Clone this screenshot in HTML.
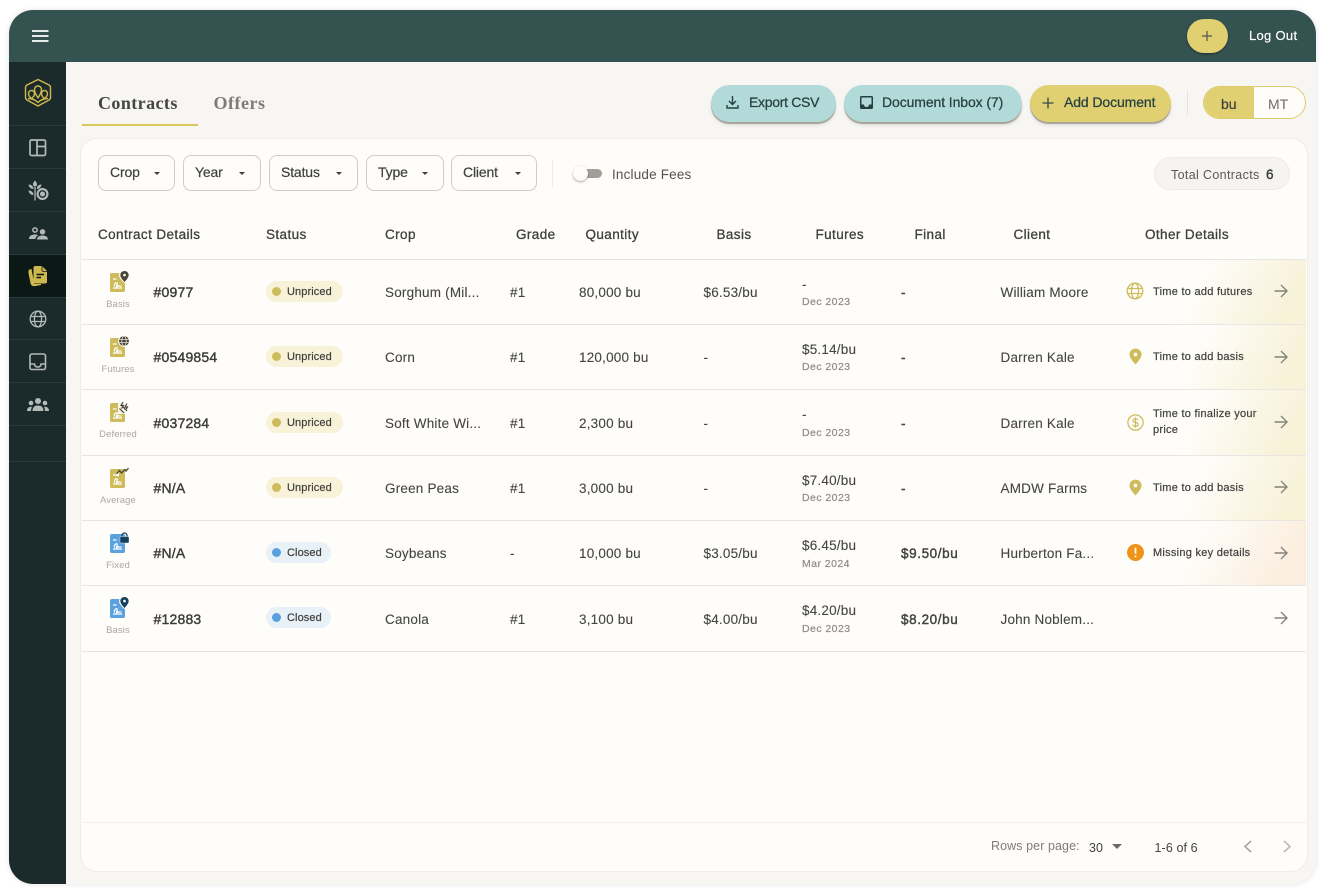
<!DOCTYPE html>
<html><head><meta charset="utf-8"><title>Contracts</title>
<style>
*{box-sizing:border-box}
html,body{margin:0;padding:0;width:1322px;height:890px;overflow:hidden;background:#fff;font-family:"Liberation Sans",sans-serif;color:#3c3c3a}
#app{position:absolute;left:9px;top:10px;width:1307px;height:874px;border-radius:24px;background:#f7f6f2;box-shadow:0 0 4px 1px rgba(0,0,0,.09);overflow:hidden}
.a{position:absolute}
.t{position:absolute;white-space:nowrap;line-height:20px;height:20px}
.h{font-size:13.5px;font-weight:400;color:#3f3f3d;-webkit-text-stroke:.3px #3f3f3d;letter-spacing:.4px;margin-top:1px}
.c{font-size:13.5px;color:#444442;letter-spacing:.2px;-webkit-text-stroke:.1px #444442}
.id{font-size:14px;font-weight:400;color:#3c3c3a;-webkit-text-stroke:.4px #3c3c3a;letter-spacing:.2px}
.sub{font-size:10.5px;color:#8d8c88;-webkit-text-stroke:.2px #8d8c88;letter-spacing:.45px;margin-top:1px}
.lab{font-size:9.5px;color:#a9a8a4;text-align:center;width:50px;margin-top:1px;letter-spacing:.1px}
.od{font-size:11px;color:#3f3f3d;-webkit-text-stroke:.2px #3f3f3d;letter-spacing:.27px;margin-top:1px}
.b{-webkit-text-stroke:.4px #3c3c3a}
.fin{letter-spacing:.6px}
.line{position:absolute;left:82px;width:1224px;height:1px;background:#e7e6e2}
.sl{position:absolute;left:9px;width:57px;height:1px;background:#2b3b3b}
.pill{position:absolute;height:21px;border-radius:11px}
.dot{position:absolute;left:6px;top:6px;width:9px;height:9px;border-radius:50%}
.pt{position:absolute;left:21px;top:1px;line-height:21px;font-size:11px;color:#3f3f3d;white-space:nowrap;-webkit-text-stroke:.2px #3f3f3d;letter-spacing:.1px}
.un{background:#f8f2d9}.un .dot{background:#cdbb5c}
.cl{background:#e9f1f8}.cl .dot{background:#58a0de}
.fb{position:absolute;top:155px;height:36px;border:1px solid #cfcdc8;border-radius:8px;background:#fefdfa}
.fb span{position:absolute;left:11px;top:6px;line-height:20px;font-size:14px;color:#3f3f3d;letter-spacing:-.15px;-webkit-text-stroke:.2px #3f3f3d}
.fb i{position:absolute;top:16px;width:0;height:0;border-left:3.5px solid transparent;border-right:3.5px solid transparent;border-top:3.5px solid #3f3f3d}
.btn{position:absolute;top:85px;height:37px;border-radius:19px;box-shadow:0 2px 0 #aaa69c,0 3px 3px rgba(0,0,0,.12)}
.btn span{position:absolute;top:7px;line-height:20px;font-size:14px;color:#26403f;white-space:nowrap;-webkit-text-stroke:.25px #26403f;letter-spacing:-.1px}
svg{position:absolute;overflow:visible}
.bg{position:absolute;left:1107px;width:199px;}
</style></head><body>
<svg width="0" height="0" style="position:absolute"><defs>
<symbol id="doc" viewBox="0 0 15 19"><rect width="15" height="19" rx="1.800" fill="currentColor"/><path d="M3 6H6.500" stroke="#fff" stroke-width="1.200"/><path d="M3 15H12M4.500 13.500C3.800 10.500 7 8.500 7.300 10.500C7.500 12 5.500 13.800 6.800 13.800C7.800 13.800 7.800 12.300 8.800 12.800C9.500 13.200 10 13.300 11.500 12.800" stroke="#fff" stroke-width="1.200" fill="none"/></symbol>
<symbol id="arrow" viewBox="0 0 14 14"><path d="M.5 7H13M7 1L13 7L7 13" fill="none" stroke="#85847f" stroke-width="1.400"/></symbol>
<symbol id="pin" viewBox="0 0 14 17"><path d="M7 0C3.300 0 .5 2.800 .5 6.300C.5 10.500 7 17 7 17S13.500 10.500 13.500 6.300C13.500 2.800 10.700 0 7 0Z" fill="currentColor"/><circle cx="7" cy="6.300" r="2" fill="#fefdfa"/></symbol>
<symbol id="globe" viewBox="0 0 18 18"><g fill="none" stroke="currentColor" stroke-width="1.300"><circle cx="9" cy="9" r="7.800"/><ellipse cx="9" cy="9" rx="3.600" ry="7.800"/><path d="M1.500 6.500H16.500M1.500 11.500H16.500"/></g></symbol>
</defs></svg>

<div id="app"></div>

<!-- header -->
<div class="a" style="left:9px;top:10px;width:1307px;height:52px;background:#345250;border-radius:24px 24px 0 0"></div>
<svg style="left:32px;top:30px" width="17" height="12"><path d="M0 1H16.500M0 6H16.500M0 11H16.500" stroke="#fff" stroke-width="1.700"/></svg>
<div class="a" style="left:1187px;top:19px;width:41px;height:34px;border-radius:17px;background:#e0d072;box-shadow:0 1px 2px rgba(0,0,0,.4)"></div>
<svg style="left:1201px;top:30px" width="12" height="12"><path d="M6 1V11M1 6H11" stroke="#56544a" stroke-width="1.200"/></svg>
<div class="t" style="left:1249px;top:26px;font-size:13px;color:#fff;-webkit-text-stroke:.2px #fff;letter-spacing:.3px">Log Out</div>

<!-- sidebar -->
<div class="a" style="left:9px;top:62px;width:57px;height:822px;background:#1b2b2b;border-radius:0 0 0 24px"></div>
<div class="a" style="left:9px;top:255px;width:57px;height:42px;background:#0c1816"></div>
<div class="sl" style="top:125px"></div><div class="sl" style="top:168px"></div><div class="sl" style="top:211px"></div><div class="sl" style="top:254px"></div><div class="sl" style="top:297px"></div><div class="sl" style="top:339px"></div><div class="sl" style="top:382px"></div><div class="sl" style="top:425px"></div><div class="sl" style="top:461px"></div>
<svg style="left:24px;top:78px" width="28" height="30" viewBox="0 0 28 30"><g fill="none" stroke="#cfb84f" stroke-width="1.400" stroke-linejoin="round"><path d="M14 1.500L25 7Q26.500 8 26.500 9.500V19.500Q26.500 21 25 22L14 28L3 22Q1.500 21 1.500 19.500V9.500Q1.500 8 3 7Z"/><path d="M14 20C11 15.500 10.500 13.500 10.500 11.500A3.500 3.500 0 0 1 17.500 11.500C17.500 13.500 17 15.500 14 20Z"/><path d="M7.500 20.500C5 18.500 4.500 17 4.500 15.500A3 3 0 0 1 10.500 15.500C10.500 17 9.500 19 7.500 20.500Z"/><path d="M20.500 20.500C23 18.500 23.500 17 23.500 15.500A3 3 0 0 0 17.500 15.500C17.500 17 18.500 19 20.500 20.500Z"/><path d="M4 20.500C8 20.500 11 21.500 14 24.500C17 21.500 20 20.500 24 20.500"/></g></svg>
<svg style="left:29px;top:139px" width="18" height="18" viewBox="0 0 18 18"><g fill="none" stroke="#b4bab8" stroke-width="1.700"><rect x="1" y="1" width="15.500" height="15.500" rx="1.500"/><path d="M8 1V16.500M8 7.500H16.500"/></g></svg>
<svg style="left:28px;top:180px" width="21" height="21" viewBox="0 0 21 21"><g fill="#b4bab8"><path d="M7 .5C8.500 2 9 3.500 9 4.500A2 2 0 0 1 5 4.500C5 3.500 5.500 2 7 .5Z"/><path d="M.5 4.500C3 4.500 5.500 6 5.500 9C3 9 1 7.500 .5 4.500Z"/><path d="M.5 10.500C3 10.500 5.500 12 5.500 15C3 15 1 13.500 .5 10.500Z"/><path d="M13.500 4.500C11 4.500 8.800 6 8.800 9C11 9 13 7.500 13.500 4.500Z"/><rect x="6.400" y="7" width="1.300" height="13.500"/><circle cx="14.500" cy="14" r="6"/></g><circle cx="14.500" cy="14" r="3.200" fill="none" stroke="#1b2b2b" stroke-width="1.300"/></svg>
<svg style="left:29px;top:227px" width="19" height="13" viewBox="0 0 19 13"><g fill="#b4bab8"><circle cx="6" cy="3" r="2.900"/><circle cx="6" cy="3" r="1.400" fill="#1b2b2b"/><path d="M0 12C0 8.500 3 7.500 6 7.500C7.500 7.500 8.500 7.800 9 8.200C7.500 9.200 6.500 10.500 6.300 12Z"/><circle cx="13.500" cy="4.800" r="2.700"/><path d="M8 12.500C8 9.500 11 8.500 13.500 8.500S19 9.500 19 12.500Z"/></g></svg>
<svg style="left:28px;top:265px" width="20" height="22" viewBox="0 0 20 22"><path d="M3 4.500C1 5 .5 6 1 8L3 18C3.500 20.500 5 21 7.500 20.500L13 19.500H6Z" fill="#cfb84f" stroke="#cfb84f"/><path d="M5.500 3A2 2 0 0 1 7.500 1H14L19 6V16.500A2 2 0 0 1 17 18.500H7.500A2 2 0 0 1 5.500 16.500Z" fill="#cfb84f"/><path d="M14 1V5A1.500 1.500 0 0 0 15.500 6.500H19" fill="none" stroke="#0c1816" stroke-width=".8"/><path d="M8.500 9.500H16M8.500 12.500H13" stroke="#0c1816" stroke-width="1.400"/></svg>
<svg style="left:29px;top:310px;color:#b4bab8" width="18" height="18"><use href="#globe"/></svg>
<svg style="left:29px;top:353px" width="18" height="18" viewBox="0 0 18 18"><g fill="none" stroke="#b4bab8" stroke-width="1.600"><rect x="1" y="1" width="15.500" height="15.500" rx="1.800"/><path d="M1 11H5.500C5.500 13 7 14 8.800 14S12 13 12 11H16.500"/></g></svg>
<svg style="left:27px;top:398px" width="22" height="14" viewBox="0 0 22 14"><g fill="#b4bab8"><circle cx="11" cy="3" r="3"/><path d="M5.500 13C5.500 9 8 7.500 11 7.500S16.500 9 16.500 13Z"/><circle cx="4" cy="5" r="2.300"/><path d="M0 13C0 10 1.800 8.500 5 8.800C4.300 10 4 11.500 4 13Z"/><circle cx="18" cy="5" r="2.300"/><path d="M22 13C22 10 20.200 8.500 17 8.800C17.700 10 18 11.500 18 13Z"/></g></svg>

<!-- tabs -->
<div class="t" style="left:98px;top:93px;font-family:'Liberation Serif',serif;font-size:18px;font-weight:700;color:#454543;letter-spacing:.42px">Contracts</div>
<div class="t" style="left:213.500px;top:93px;font-family:'Liberation Serif',serif;font-size:18px;font-weight:700;color:#7c7b77;letter-spacing:.5px">Offers</div>
<div class="a" style="left:82px;top:123.500px;width:116px;height:2px;background:#dac95f"></div>

<!-- buttons -->
<div class="btn" style="left:711px;width:125px;background:#b2dad9"><span style="left:38px;letter-spacing:-.3px">Export CSV</span></div>
<svg style="left:726px;top:96px" width="13" height="13" viewBox="0 0 13 13"><path d="M6.500 0V8M3 5L6.500 8.500L10 5M1 9V12H12V9" fill="none" stroke="#26403f" stroke-width="1.400"/></svg>
<div class="btn" style="left:844px;width:178px;background:#b2dad9"><span style="left:38px">Document Inbox (7)</span></div>
<svg style="left:860px;top:96px" width="13" height="13" viewBox="0 0 13 13"><path d="M1.500 0H11.500A1.500 1.500 0 0 1 13 1.500V11.500A1.500 1.500 0 0 1 11.500 13H1.500A1.500 1.500 0 0 1 0 11.500V1.500A1.500 1.500 0 0 1 1.500 0ZM1.500 1.500V8.500H4C4 10 5 11 6.500 11S9 10 9 8.500H11.500V1.500Z" fill="#26403f" fill-rule="evenodd"/></svg>
<div class="btn" style="left:1030px;width:141px;background:#e0d072"><span style="left:34px">Add Document</span></div>
<svg style="left:1042px;top:97px" width="12" height="12"><path d="M6 .5V11.500M.5 6H11.500" stroke="#3a4a44" stroke-width="1.300"/></svg>
<div class="a" style="left:1187px;top:90px;width:1px;height:26px;background:#e6e5e0"></div>
<div class="a" style="left:1203px;top:86px;width:103px;height:33px;border-radius:17px;border:1.500px solid #dccb6a;background:#fefdfa;overflow:hidden"><div style="width:50px;height:100%;background:#e0d072"></div></div>
<div class="t" style="left:1221px;top:94px;font-size:14px;color:#3f3f3d;-webkit-text-stroke:.2px #3f3f3d">bu</div>
<div class="t" style="left:1268px;top:94px;font-size:14px;color:#6d6c68">MT</div>

<!-- card -->
<div class="a" style="left:81px;top:139px;width:1226px;height:732px;border-radius:16px;background:#fefdfa;box-shadow:0 0 0 1px #eeede8"></div>

<!-- filters -->
<div class="fb" style="left:98px;width:77px"><span>Crop</span><i style="left:55px"></i></div>
<div class="fb" style="left:183px;width:78px"><span>Year</span><i style="left:55px"></i></div>
<div class="fb" style="left:269px;width:89px"><span>Status</span><i style="left:66px"></i></div>
<div class="fb" style="left:366px;width:78px"><span>Type</span><i style="left:55px"></i></div>
<div class="fb" style="left:451px;width:86px"><span>Client</span><i style="left:63px"></i></div>
<div class="a" style="left:552px;top:160px;width:1px;height:27px;background:#eeece8"></div>
<div class="a" style="left:582px;top:169px;width:20px;height:9px;border-radius:5px;background:#a09f9a"></div>
<div class="a" style="left:573px;top:166px;width:15px;height:15px;border-radius:50%;background:#fefdfa;box-shadow:0 1px 2px rgba(0,0,0,.35)"></div>
<div class="t" style="left:612px;top:165px;font-size:13.500px;color:#555451;letter-spacing:.18px">Include Fees</div>
<div class="a" style="left:1154px;top:157px;width:136px;height:33px;border-radius:17px;background:#f5f4f0;border:1px solid #ecebe6"></div>
<div class="t" style="left:1171px;top:165px;font-size:12.500px;color:#5a5955;letter-spacing:.35px">Total Contracts</div>
<div class="t b" style="left:1266px;top:165px;font-size:13.500px">6</div>

<!-- head -->
<div class="t h" style="left:98px;top:224px">Contract Details</div>
<div class="t h" style="left:266px;top:224px">Status</div>
<div class="t h" style="left:385px;top:224px">Crop</div>
<div class="t h" style="left:516px;top:224px">Grade</div>
<div class="t h" style="left:585.500px;top:224px">Quantity</div>
<div class="t h" style="left:716.500px;top:224px">Basis</div>
<div class="t h" style="left:815.500px;top:224px">Futures</div>
<div class="t h" style="left:914.500px;top:224px">Final</div>
<div class="t h" style="left:1013.500px;top:224px">Client</div>
<div class="t h" style="left:1145px;top:224px">Other Details</div>

<!-- gradients -->
<div class="bg" style="top:260px;height:64px;background:linear-gradient(118deg,rgba(248,242,217,0) 42%,#f8f2d9 88%)"></div>
<div class="bg" style="top:325px;height:64px;background:linear-gradient(118deg,rgba(248,242,217,0) 42%,#f8f2d9 88%)"></div>
<div class="bg" style="top:390px;height:65px;background:linear-gradient(118deg,rgba(248,242,217,0) 42%,#f8f2d9 88%)"></div>
<div class="bg" style="top:456px;height:64px;background:linear-gradient(118deg,rgba(248,242,217,0) 42%,#f8f2d9 88%)"></div>
<div class="bg" style="top:521px;height:64px;background:linear-gradient(118deg,rgba(251,238,222,0) 42%,#fbeede 88%)"></div>

<!-- lines -->
<div class="line" style="top:259px"></div><div class="line" style="top:324px"></div><div class="line" style="top:389px"></div><div class="line" style="top:455px"></div><div class="line" style="top:520px"></div><div class="line" style="top:585px"></div><div class="line" style="top:651px"></div><div class="line" style="top:822px;background:#f2f1ed"></div>

<!-- row 1 -->
<svg style="left:110px;top:273px;color:#cdbb5c" width="15" height="19"><use href="#doc"/></svg>
<svg style="left:119px;top:270px" width="11" height="13" viewBox="0 0 11 13"><path d="M5.500 0C2.500 0 0 2.300 0 5.200C0 8.500 5.500 13 5.500 13S11 8.500 11 5.200C11 2.300 8.500 0 5.500 0Z" fill="#fefdfa"/></svg>
<svg style="left:120px;top:271px;color:#4a4636" width="9" height="11"><use href="#pin"/></svg>
<div class="t lab" style="left:93px;top:294px">Basis</div>
<div class="t id" style="left:153.500px;top:282px">#0977</div>
<div class="pill un" style="left:266px;top:281px;width:77px"><div class="dot"></div><div class="pt">Unpriced</div></div>
<div class="t c" style="left:385px;top:283px">Sorghum (Mil...</div>
<div class="t c" style="left:510px;top:283px">#1</div>
<div class="t c" style="left:579px;top:283px">80,000 bu</div>
<div class="t c" style="left:703.500px;top:283px">$6.53/bu</div>
<div class="t c" style="left:802px;top:275px">-</div>
<div class="t sub" style="left:802px;top:291px">Dec 2023</div>
<div class="t b c fin" style="left:901px;top:283px">-</div>
<div class="t c" style="left:1000.500px;top:283px">William Moore</div>
<svg style="left:1126px;top:282px;color:#cdbb5c" width="18" height="18"><use href="#globe"/></svg>
<div class="t od" style="left:1153px;top:281px">Time to add futures</div>
<svg style="left:1274px;top:284px" width="14" height="14"><use href="#arrow"/></svg>

<!-- row 2 -->
<svg style="left:110px;top:338px;color:#cdbb5c" width="15" height="19"><use href="#doc"/></svg>
<svg style="left:119px;top:336px;color:#4a4636" width="10" height="10" viewBox="0 0 18 18"><circle cx="9" cy="9" r="10.500" fill="#fefdfa"/><circle cx="9" cy="9" r="9" fill="#4a4636"/><g fill="none" stroke="#fefdfa" stroke-width="1.200"><ellipse cx="9" cy="9" rx="4" ry="9"/><path d="M0 6H18M0 12H18"/></g></svg>
<div class="t lab" style="left:93px;top:359px">Futures</div>
<div class="t id" style="left:153.500px;top:347px">#0549854</div>
<div class="pill un" style="left:266px;top:346px;width:77px"><div class="dot"></div><div class="pt">Unpriced</div></div>
<div class="t c" style="left:385px;top:348px">Corn</div>
<div class="t c" style="left:510px;top:348px">#1</div>
<div class="t c" style="left:579px;top:348px">120,000 bu</div>
<div class="t c" style="left:703.500px;top:348px">-</div>
<div class="t c" style="left:802px;top:340px">$5.14/bu</div>
<div class="t sub" style="left:802px;top:356px">Dec 2023</div>
<div class="t b c fin" style="left:901px;top:348px">-</div>
<div class="t c" style="left:1000.500px;top:348px">Darren Kale</div>
<svg style="left:1129px;top:348px;color:#cdbb5c" width="13" height="17"><use href="#pin"/></svg>
<div class="t od" style="left:1153px;top:346px">Time to add basis</div>
<svg style="left:1274px;top:350px" width="14" height="14"><use href="#arrow"/></svg>

<!-- row 3 -->
<svg style="left:110px;top:403px;color:#cdbb5c" width="15" height="19"><use href="#doc"/></svg>
<svg style="left:118px;top:401px" width="12" height="13" viewBox="0 0 12 13"><path d="M0 1H12V13H0Z" fill="#fefdfa" opacity=".9"/><path d="M5 1L3 4.500H5.500L3.500 7.500M9 2.500L7 6H9.500L7.500 9M1.500 7.500L6 12M4.500 5.500L9 10" fill="none" stroke="#4a4636" stroke-width="1.200"/></svg>
<div class="t lab" style="left:93px;top:424px">Deferred</div>
<div class="t id" style="left:153.500px;top:413px">#037284</div>
<div class="pill un" style="left:266px;top:412px;width:77px"><div class="dot"></div><div class="pt">Unpriced</div></div>
<div class="t c" style="left:385px;top:414px">Soft White Wi...</div>
<div class="t c" style="left:510px;top:414px">#1</div>
<div class="t c" style="left:579px;top:414px">2,300 bu</div>
<div class="t c" style="left:703.500px;top:414px">-</div>
<div class="t c" style="left:802px;top:405px">-</div>
<div class="t sub" style="left:802px;top:422px">Dec 2023</div>
<div class="t b c fin" style="left:901px;top:414px">-</div>
<div class="t c" style="left:1000.500px;top:414px">Darren Kale</div>
<svg style="left:1127px;top:414px" width="17" height="17" viewBox="0 0 17 17"><circle cx="8.500" cy="8.500" r="7.600" fill="none" stroke="#cdbb5c" stroke-width="1.300"/><path d="M11 6.200C10.500 5 9.500 4.700 8.500 4.700C7.200 4.700 6 5.400 6 6.600C6 9.300 11.200 7.700 11.200 10.400C11.200 11.600 10 12.300 8.500 12.300C7.300 12.300 6.300 11.800 5.800 10.700M8.500 3.300V13.700" fill="none" stroke="#cdbb5c" stroke-width="1.200"/></svg>
<div class="t od" style="left:1153px;top:403px">Time to finalize your</div>
<div class="t od" style="left:1153px;top:419px">price</div>
<svg style="left:1274px;top:415px" width="14" height="14"><use href="#arrow"/></svg>

<!-- row 4 -->
<svg style="left:110px;top:469px;color:#cdbb5c" width="15" height="19"><use href="#doc"/></svg>
<svg style="left:116px;top:467px" width="13" height="8" viewBox="0 0 13 8"><path d="M0 7.500H3M9 8H13" stroke="#fefdfa" stroke-width="3"/><path d="M.5 7L3.500 3.500L5.500 6L9 2.500L10 4L12.500 1" fill="none" stroke="#4a4636" stroke-width="1.300"/></svg>
<div class="t lab" style="left:93px;top:490px">Average</div>
<div class="t id" style="left:153.500px;top:478px">#N/A</div>
<div class="pill un" style="left:266px;top:477px;width:77px"><div class="dot"></div><div class="pt">Unpriced</div></div>
<div class="t c" style="left:385px;top:479px">Green Peas</div>
<div class="t c" style="left:510px;top:479px">#1</div>
<div class="t c" style="left:579px;top:479px">3,000 bu</div>
<div class="t c" style="left:703.500px;top:479px">-</div>
<div class="t c" style="left:802px;top:471px">$7.40/bu</div>
<div class="t sub" style="left:802px;top:487px">Dec 2023</div>
<div class="t b c fin" style="left:901px;top:479px">-</div>
<div class="t c" style="left:1000.500px;top:479px">AMDW Farms</div>
<svg style="left:1129px;top:479px;color:#cdbb5c" width="13" height="17"><use href="#pin"/></svg>
<div class="t od" style="left:1153px;top:477px">Time to add basis</div>
<svg style="left:1274px;top:480px" width="14" height="14"><use href="#arrow"/></svg>

<!-- row 5 -->
<svg style="left:110px;top:534px;color:#5ba3e0" width="15" height="19"><use href="#doc"/></svg>
<svg style="left:119.500px;top:533px" width="9" height="10" viewBox="0 0 9 10"><path d="M2 4V2.500A2.500 2.500 0 0 1 7 2.500V4" fill="none" stroke="#17405f" stroke-width="1.200"/><rect x="0" y="3.500" width="9" height="6.500" rx="1" fill="#17405f" stroke="#fefdfa" stroke-width=".4"/></svg>
<div class="t lab" style="left:93px;top:555px">Fixed</div>
<div class="t id" style="left:153.500px;top:543px">#N/A</div>
<div class="pill cl" style="left:266px;top:542px;width:65px"><div class="dot"></div><div class="pt">Closed</div></div>
<div class="t c" style="left:385px;top:544px">Soybeans</div>
<div class="t c" style="left:510px;top:544px">-</div>
<div class="t c" style="left:579px;top:544px">10,000 bu</div>
<div class="t c" style="left:703.500px;top:544px">$3.05/bu</div>
<div class="t c" style="left:802px;top:536px">$6.45/bu</div>
<div class="t sub" style="left:802px;top:553px">Mar 2024</div>
<div class="t b c fin" style="left:901px;top:544px">$9.50/bu</div>
<div class="t c" style="left:1000.500px;top:544px">Hurberton Fa...</div>
<svg style="left:1126.500px;top:544px" width="17" height="17" viewBox="0 0 17 17"><circle cx="8.500" cy="8.500" r="8.500" fill="#ee9418"/><path d="M8.500 3.800V9.800M8.500 11.500V13.300" stroke="#fff" stroke-width="1.700"/></svg>
<div class="t od" style="left:1153px;top:542px">Missing key details</div>
<svg style="left:1274px;top:546px" width="14" height="14"><use href="#arrow"/></svg>

<!-- row 6 -->
<svg style="left:110px;top:599px;color:#5ba3e0" width="15" height="19"><use href="#doc"/></svg>
<svg style="left:119px;top:596px" width="11" height="13" viewBox="0 0 11 13"><path d="M5.500 0C2.500 0 0 2.300 0 5.200C0 8.500 5.500 13 5.500 13S11 8.500 11 5.200C11 2.300 8.500 0 5.500 0Z" fill="#fefdfa"/></svg>
<svg style="left:120px;top:597px;color:#17405f" width="9" height="11"><use href="#pin"/></svg>
<div class="t lab" style="left:93px;top:620px">Basis</div>
<div class="t id" style="left:153.500px;top:609px">#12883</div>
<div class="pill cl" style="left:266px;top:607px;width:65px"><div class="dot"></div><div class="pt">Closed</div></div>
<div class="t c" style="left:385px;top:610px">Canola</div>
<div class="t c" style="left:510px;top:610px">#1</div>
<div class="t c" style="left:579px;top:610px">3,100 bu</div>
<div class="t c" style="left:703.500px;top:610px">$4.00/bu</div>
<div class="t c" style="left:802px;top:601px">$4.20/bu</div>
<div class="t sub" style="left:802px;top:618px">Dec 2023</div>
<div class="t b c fin" style="left:901px;top:610px">$8.20/bu</div>
<div class="t c" style="left:1000.500px;top:610px">John Noblem...</div>
<svg style="left:1274px;top:611px" width="14" height="14"><use href="#arrow"/></svg>

<!-- footer -->
<div class="t" style="left:991px;top:836px;font-size:12.500px;color:#7d7c78;letter-spacing:.08px">Rows per page:</div>
<div class="t" style="left:1089px;top:838px;font-size:12.500px;color:#444442">30</div>
<div class="a" style="left:1112px;top:844px;width:0;height:0;border-left:5px solid transparent;border-right:5px solid transparent;border-top:5px solid #6a6965"></div>
<div class="t" style="left:1154.500px;top:838px;font-size:12.500px;color:#444442;letter-spacing:.1px">1-6 of 6</div>
<svg style="left:1243px;top:840px" width="10" height="13"><path d="M8 1L2 6.500L8 12" fill="none" stroke="#a8a7a3" stroke-width="1.700"/></svg>
<svg style="left:1282px;top:840px" width="10" height="13"><path d="M2 1L8 6.500L2 12" fill="none" stroke="#bcbbb7" stroke-width="1.700"/></svg>
</body></html>
